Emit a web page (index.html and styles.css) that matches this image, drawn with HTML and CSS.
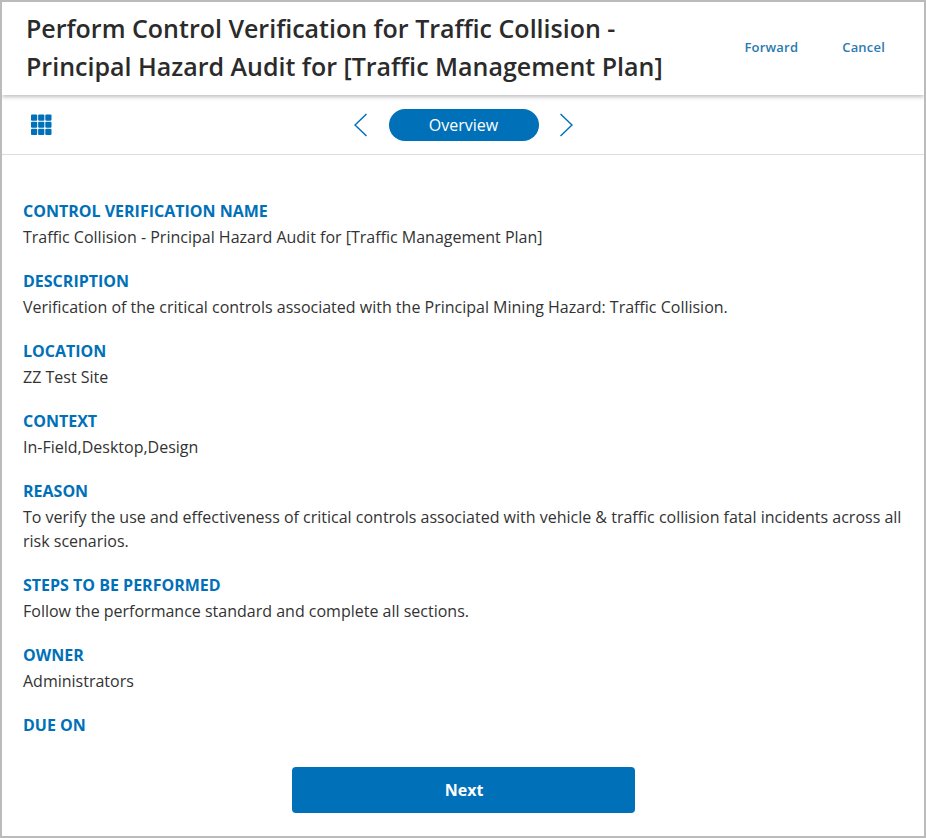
FILE: index.html
```html
<!DOCTYPE html>
<html lang="en">
<head>
<meta charset="utf-8">
<title>Perform Control Verification</title>
<link rel="stylesheet" href="styles.css">
</head>
<body>
<div class="panel">
  <header class="header">
    <h1 class="title">Perform Control Verification for Traffic Collision - Principal Hazard Audit for [Traffic Management Plan]</h1>
    <div class="actions">
      <a class="action">Forward</a>
      <a class="action">Cancel</a>
    </div>
  </header>
  <nav class="subnav">
    <svg class="grid-icon" width="22" height="22" viewBox="0 0.5 22 22" aria-hidden="true">
      <rect x="1" y="1" width="6.200" height="6.200" rx="1"/><rect x="8.150" y="1" width="6.200" height="6.200" rx="1"/><rect x="15.300" y="1" width="6.200" height="6.200" rx="1"/>
      <rect x="1" y="8.150" width="6.200" height="6.200" rx="1"/><rect x="8.150" y="8.150" width="6.200" height="6.200" rx="1"/><rect x="15.300" y="8.150" width="6.200" height="6.200" rx="1"/>
      <rect x="1" y="15.300" width="6.200" height="6.200" rx="1"/><rect x="8.150" y="15.300" width="6.200" height="6.200" rx="1"/><rect x="15.300" y="15.300" width="6.200" height="6.200" rx="1"/>
    </svg>
    <div class="stepper">
      <svg class="chev chev-prev" width="13" height="24" viewBox="0 0 13 24" aria-hidden="true"><path d="M12.500 1 1 12 12.500 23"/></svg>
      <span class="pill">Overview</span>
      <svg class="chev" width="13" height="24" viewBox="0 0 13 24" aria-hidden="true"><path d="M.5 1 12 12 .5 23"/></svg>
    </div>
  </nav>
  <main class="content">
    <section class="field"><h2 class="label">CONTROL VERIFICATION NAME</h2><p class="value">Traffic Collision - Principal Hazard Audit for [Traffic Management Plan]</p></section>
    <section class="field"><h2 class="label">DESCRIPTION</h2><p class="value">Verification of the critical controls associated with the Principal Mining Hazard: Traffic Collision.</p></section>
    <section class="field"><h2 class="label">LOCATION</h2><p class="value">ZZ Test Site</p></section>
    <section class="field"><h2 class="label">CONTEXT</h2><p class="value">In-Field,Desktop,Design</p></section>
    <section class="field"><h2 class="label">REASON</h2><p class="value">To verify the use and effectiveness of critical controls associated with vehicle &amp; traffic collision fatal incidents across all risk scenarios.</p></section>
    <section class="field"><h2 class="label">STEPS TO BE PERFORMED</h2><p class="value">Follow the performance standard and complete all sections.</p></section>
    <section class="field"><h2 class="label">OWNER</h2><p class="value">Administrators</p></section>
    <section class="field"><h2 class="label">DUE ON</h2></section>
  </main>
  <footer class="footer"><button class="next" type="button">Next</button></footer>
</div>
</body>
</html>
```
FILE: styles.css
```css
html, body {
  margin: 0;
  height: 100%;
  background: #fff;
}
* { box-sizing: border-box; }
.panel {
  height: 838px;
  border: 2px solid #bbb;
  display: flex;
  flex-direction: column;
  font-family: "Open Sans", "Liberation Sans", sans-serif;
  color: #333;
  background: #fff;
  overflow: hidden;
}
.header {
  flex: none;
  height: 93px;
  display: flex;
  align-items: flex-start;
  padding: 7px 39px 0 24px;
  box-shadow: 0 2px 4px rgba(0,0,0,.25);
  position: relative;
}
.title {
  margin: 0;
  flex: 1;
  font-size: 25px;
  line-height: 38px;
  font-weight: 600;
  color: #2b2b2b;
  max-width: 680px;
}
.actions {
  display: flex;
  gap: 44px;
  margin-top: 29px;
  margin-left: auto;
}
.action {
  font-size: 13px;
  line-height: 18px;
  font-weight: 600;
  letter-spacing: .2px;
  color: #2a7ab0;
}
.subnav {
  flex: none;
  height: 60px;
  border-bottom: 1px solid #ddd;
  display: flex;
  align-items: center;
  justify-content: center;
  position: relative;
}
.grid-icon {
  position: absolute;
  left: 28px;
  top: 19px;
  fill: #0070b8;
}
.stepper {
  display: flex;
  align-items: center;
  gap: 21px;
  padding-left: 1px;
}
.chev-prev { margin-right: 1px; }
.chev {
  fill: none;
  stroke: #0070b8;
  stroke-width: 1.5;
}
.pill {
  width: 150px;
  height: 32px;
  padding-right: 1px;
  border-radius: 16px;
  background: #0070b8;
  color: #fff;
  font-size: 16px;
  line-height: 32px;
  text-align: center;
}
.content {
  flex: 1;
  min-height: 0;
  overflow: hidden;
  padding: 44px 21px 0;
  display: flex;
  flex-direction: column;
  gap: 20px;
}
.label {
  margin: 0 0 2px;
  font-size: 16px;
  line-height: 24px;
  font-weight: 700;
  color: #0070b8;
}
.value {
  margin: 0;
  font-size: 16px;
  line-height: 24px;
  color: #333;
}
.footer {
  flex: none;
  height: 69px;
  display: flex;
  justify-content: center;
  align-items: flex-start;
}
.next {
  width: 343px;
  height: 46px;
  padding: 0 0 0 2px;
  border: 0;
  border-radius: 4px;
  background: #0070b8;
  color: #fff;
  font-family: inherit;
  font-size: 16px;
  font-weight: 700;
}
```
